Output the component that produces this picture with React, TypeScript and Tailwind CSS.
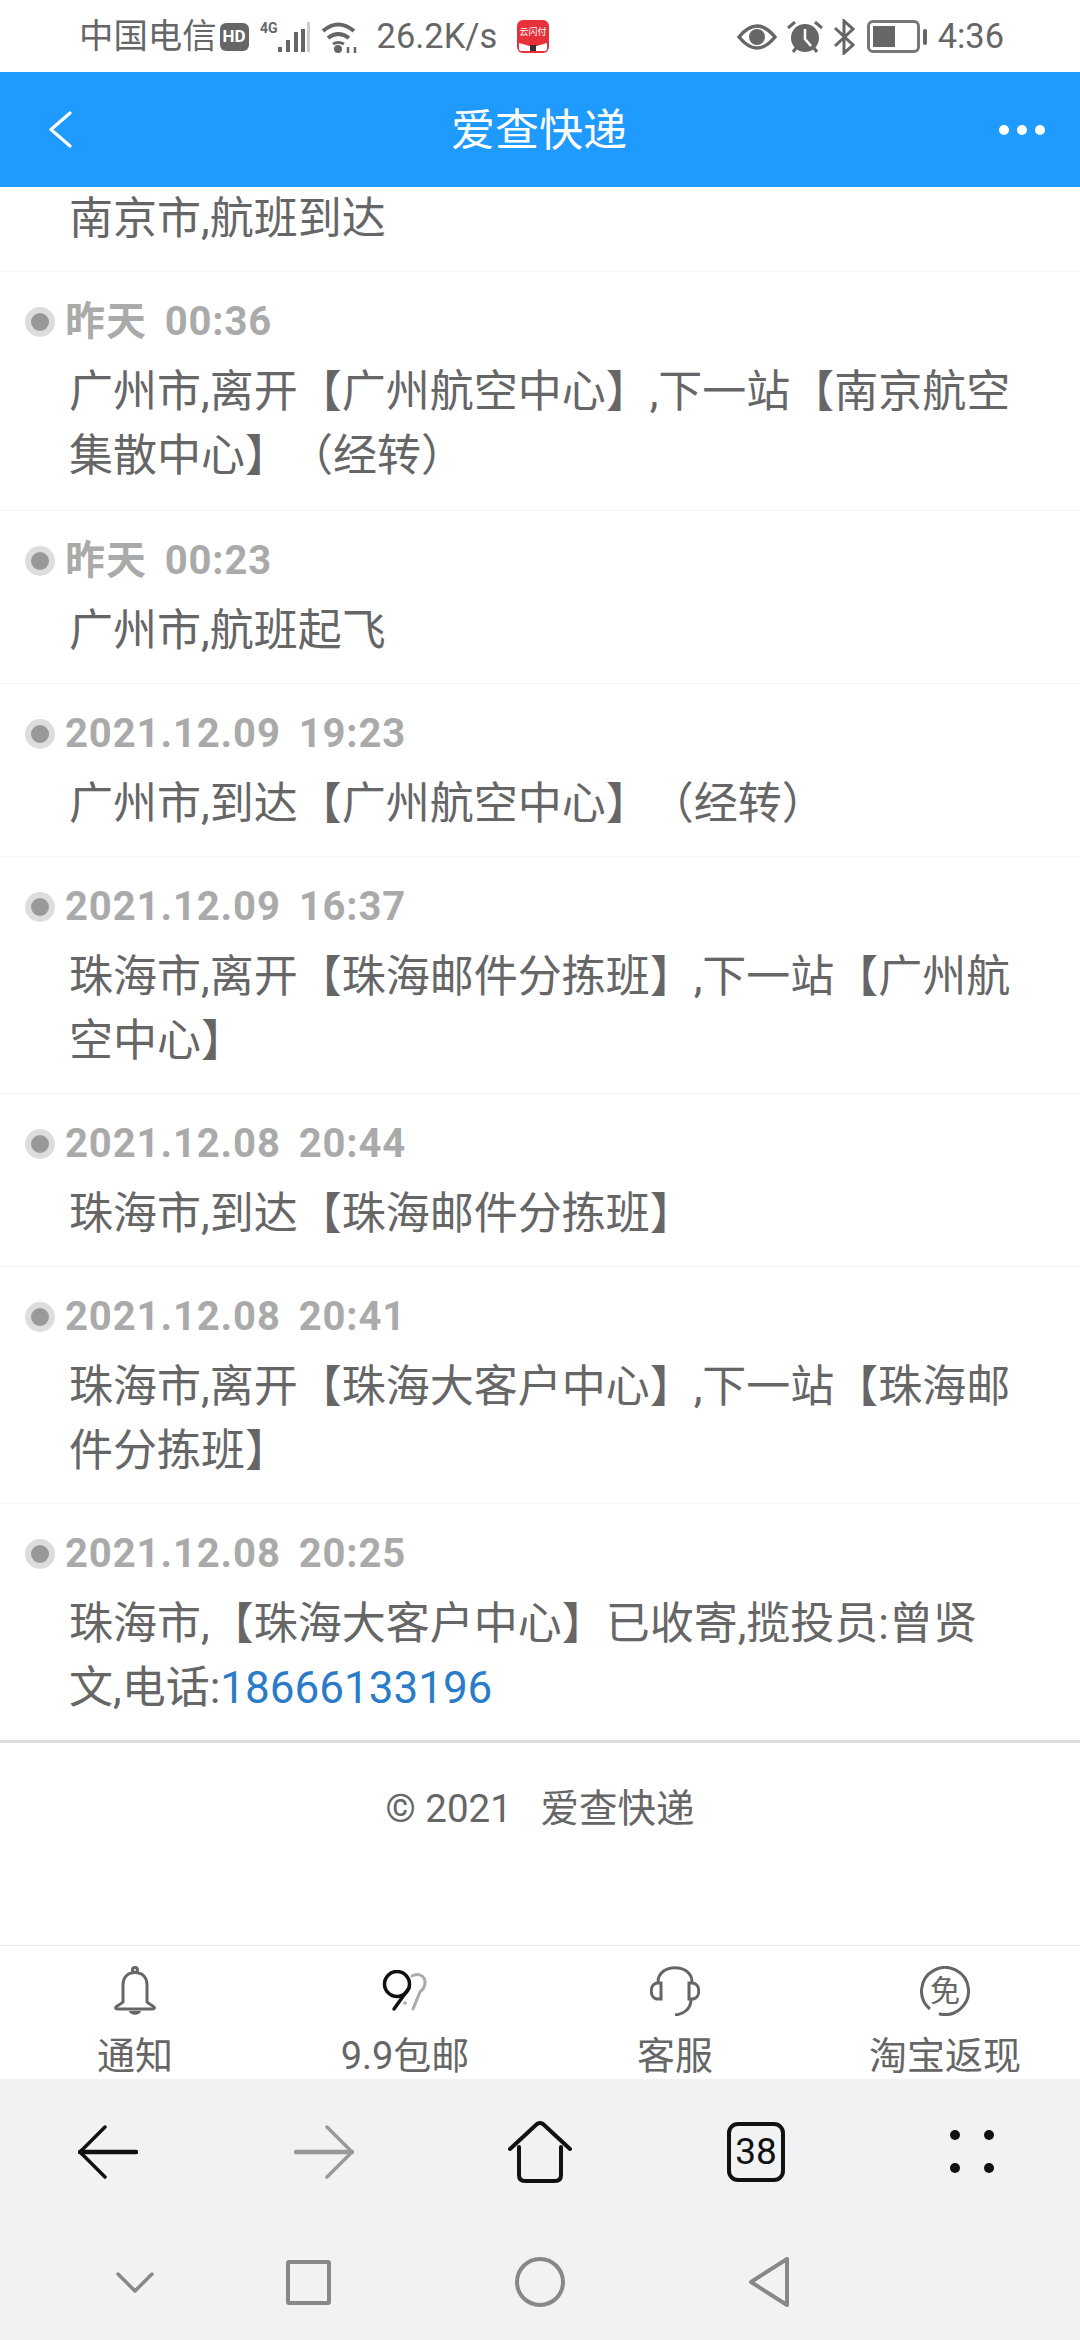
const rows = [
  { time: "昨天 00:36", text: "广州市,离开【广州航空中心】,下一站【南京航空集散中心】（经转）" },
  { time: "昨天 00:23", text: "广州市,航班起飞" },
  { time: "2021.12.09 19:23", text: "广州市,到达【广州航空中心】（经转）" },
  { time: "2021.12.09 16:37", text: "珠海市,离开【珠海邮件分拣班】,下一站【广州航空中心】" },
  { time: "2021.12.08 20:44", text: "珠海市,到达【珠海邮件分拣班】" },
  { time: "2021.12.08 20:41", text: "珠海市,离开【珠海大客户中心】,下一站【珠海邮件分拣班】" },
]

function StatusBar() {
  return (
    <div className="flex h-[72px] items-center justify-between bg-white pl-[79px] pr-[76px] pt-[2px] text-[34.4px] text-[#666]">
      <div className="flex items-center">
        <span>中国电信</span>
        <span className="ml-[3px] flex h-[28px] w-[29px] items-center justify-center rounded-[6px] bg-[#666] text-[17px] font-bold text-white">HD</span>
        <svg width="50" height="34" viewBox="0 0 50 34" className="ml-[11px]">
          <text x="0" y="13" fontSize="14" fontWeight="700" fill="#666" fontFamily="Roboto">4G</text>
          <rect x="18" y="27" width="4" height="5" fill="#666" />
          <rect x="26" y="20" width="4" height="12" fill="#666" />
          <rect x="34" y="12" width="4" height="20" fill="#666" />
          <rect x="41" y="9" width="4" height="23" fill="#666" />
          <rect x="47" y="2" width="3" height="30" fill="#ccc" />
        </svg>
        <svg width="38" height="32" viewBox="0 0 38 32" fill="none" stroke="#666" strokeWidth="4" className="ml-[11px]">
          <path d="M2 10 Q17 -3 33 10" />
          <path d="M7 17 Q17 9 28 17" />
          <path d="M12 23 Q17 20 23 23" strokeWidth="3" />
          <circle cx="17" cy="28" r="4" fill="#666" stroke="none" />
          <path d="M27 26v6M34 26v6" strokeWidth="2.5" />
        </svg>
        <span className="ml-[18px]">26.2K/s</span>
        <svg width="32" height="33" viewBox="0 0 32 33" className="ml-[20px]">
          <rect width="32" height="33" rx="6" fill="#e8303a" />
          <path d="M2 23 L16 27 L30 23 V29 Q30 31 27 31 H5 Q2 31 2 29 Z" fill="#fff" />
          <text x="16" y="15" fontSize="9" textAnchor="middle" fill="#fff" fontFamily="'Noto Sans CJK SC'">云闪付</text>
          <rect x="13" y="25" width="6" height="6" fill="#333" />
        </svg>
      </div>
      <div className="flex items-center">
        <svg width="40" height="26" viewBox="0 0 40 26" fill="none" stroke="#666" strokeWidth="3.5">
          <path d="M2 13 Q20 -9 38 13 Q20 35 2 13 Z" />
          <circle cx="20" cy="13" r="8" fill="#666" stroke="none" />
        </svg>
        <svg width="36" height="32" viewBox="0 0 36 32" className="ml-[10px]">
          <circle cx="18" cy="17" r="14" fill="#666" />
          <path d="M18 8v10l6 7" fill="none" stroke="#fff" strokeWidth="2.5" />
          <path d="M1 7 L8 1 M35 7 L28 1 M6 31 L9 27 M30 31 L27 27" stroke="#666" strokeWidth="3" />
        </svg>
        <svg width="22" height="36" viewBox="0 0 22 36" fill="none" stroke="#666" strokeWidth="3" className="ml-[10px]">
          <path d="M2 9 L20 26 L11 34 V2 L20 10 L2 27" />
        </svg>
        <div className="ml-[12px] flex h-[33px] w-[53px] items-center rounded-[6px] border-[3px] border-[#777] px-[3px]">
          <div className="h-[21px] w-[22px] bg-[#666]" />
        </div>
        <div className="ml-[3px] h-[16px] w-[4px] rounded-sm bg-[#666]" />
        <span className="ml-[11px]">4:36</span>
      </div>
    </div>
  )
}

function Header() {
  return (
    <div className="flex h-[115px] items-center justify-between bg-[#1f9bff] pl-[48px] pr-[35px] text-white">
      <svg width="24" height="37" viewBox="0 0 24 37" fill="none" stroke="#fff" strokeWidth="3.2" strokeLinecap="round" strokeLinejoin="round">
        <path d="M22 2 L3 18.5 L22 35" />
      </svg>
      <span className="ml-[7px] mt-[2px] text-[44px]">爱查快递</span>
      <div className="flex gap-[8px]">
        <div className="h-[10px] w-[10px] rounded-full bg-white" />
        <div className="h-[10px] w-[10px] rounded-full bg-white" />
        <div className="h-[10px] w-[10px] rounded-full bg-white" />
      </div>
    </div>
  )
}

function Row({ time, children, last, first }: { time: string; children: React.ReactNode; last?: boolean; first?: boolean }) {
  return (
    <div
      className={
        last
          ? "border-b-[3px] border-[#ddd] pb-[20px] pt-[27px]"
          : first
            ? "border-b border-[#f3f3f3] pb-[22px] pt-[27px]"
            : "border-b border-[#f3f3f3] pb-[20px] pt-[27px]"
      }
    >
      <div className="flex h-[46px] items-center pl-[25px]">
        <div className="flex h-[30px] w-[30px] items-center justify-center rounded-full bg-[#ddd]">
          <div className="h-[18px] w-[18px] rounded-full bg-[#999]" />
        </div>
        <span className="ml-[10px] whitespace-pre text-[40px] font-bold tracking-[0.9px] text-[#aaa] [word-spacing:7px]">{time}</span>
      </div>
      <div className="mt-[15px] pl-[69px] pr-[55px] text-[44px] leading-[64px] text-[#666] [text-spacing-trim:space-all]">{children}</div>
    </div>
  )
}

function TabIcon({ name }: { name: string }) {
  if (name === "bell")
    return (
      <svg width="42" height="50" viewBox="0 0 42 50" fill="none" stroke="#666" strokeWidth="3" strokeLinejoin="round">
        <circle cx="21" cy="4" r="2.5" />
        <path d="M9 36 V19 C9 11 14 6.5 21 6.5 C28 6.5 33 11 33 19 V36 C35 38 38 39 40 41 C41 42 40 43 38 43 H4 C2 43 1 42 2 41 C4 39 7 38 9 36 Z" />
        <path d="M15 45 H27 C26 50 16 50 15 45 Z" fill="#666" stroke="none" />
      </svg>
    )
  if (name === "99")
    return (
      <svg width="46" height="42" viewBox="0 0 46 42" fill="none" strokeWidth="3.5" strokeLinecap="round">
        <path d="M30 6 C42 0 48 14 38 22 L31 39" stroke="#aaa" strokeWidth="3" />
        <circle cx="23" cy="33" r="1.8" fill="#aaa" stroke="none" />
        <circle cx="15" cy="14" r="12.5" stroke="#111" />
        <path d="M27 18 L12 39" stroke="#111" />
      </svg>
    )
  if (name === "headset")
    return (
      <svg width="50" height="50" viewBox="0 0 50 50" fill="none" stroke="#666" strokeWidth="3">
        <path d="M8 16 C8 -3 42 -3 42 16" />
        <path d="M11 17 V33 H8 C-1 33 -1 17 8 17 Z" />
        <path d="M39 17 V33 H42 C51 33 51 17 42 17 Z" />
        <path d="M41 33 C41 42 35 48 25 49" />
      </svg>
    )
  return (
    <div className="relative flex h-[50px] w-[50px] items-center justify-center text-[30px] leading-none text-[#666]">
      <svg width="50" height="50" viewBox="0 0 50 50" fill="none" stroke="#666" strokeWidth="3" className="absolute inset-0">
        <path d="M9.9 43 A23.5 23.5 0 1 1 18.9 47.7" />
      </svg>
      免
    </div>
  )
}

const tabs = [
  { icon: "bell", label: "通知" },
  { icon: "99", label: "9.9包邮" },
  { icon: "headset", label: "客服" },
  { icon: "free", label: "淘宝返现" },
]

function TabBar() {
  return (
    <div className="grid h-[134px] grid-cols-4 border-t border-[#ececec] bg-white">
      {tabs.map((t) => (
        <div key={t.label} className="flex flex-col items-center pt-[20px]">
          <div className="flex h-[50px] items-center justify-center">
            <TabIcon name={t.icon} />
          </div>
          <span className="mt-[17px] text-[38px] leading-[46px] text-[#666]">{t.label}</span>
        </div>
      ))}
    </div>
  )
}

function BrowserBar() {
  return (
    <div className="grid h-[151px] grid-cols-5 items-center pb-[6px]">
      <div className="flex justify-center">
        <svg width="60" height="54" viewBox="0 0 60 54" fill="none" stroke="#111" strokeWidth="3.5" strokeLinecap="round">
          <path d="M27 2 L2 27 L27 52" />
          <path d="M2 27 H58" strokeWidth="4.5" />
        </svg>
      </div>
      <div className="flex justify-center">
        <svg width="60" height="54" viewBox="0 0 60 54" fill="none" stroke="#999" strokeWidth="3.5" strokeLinecap="round">
          <path d="M33 2 L58 27 L33 52" />
          <path d="M2 27 H58" strokeWidth="4.5" />
        </svg>
      </div>
      <div className="flex justify-center">
        <svg width="64" height="62" viewBox="0 0 64 62" fill="none" stroke="#111" strokeWidth="4" strokeLinecap="round" strokeLinejoin="round">
          <path d="M2 28 L29 3 Q32 1 35 3 L62 28" />
          <path d="M11 26 V54 Q11 60 17 60 H47 Q53 60 53 54 V26" />
        </svg>
      </div>
      <div className="flex justify-center">
        <div className="flex h-[60px] w-[58px] items-center justify-center rounded-[11px] border-[4px] border-[#111] text-[37px] text-[#111]">38</div>
      </div>
      <div className="flex justify-center">
        <div className="grid grid-cols-2 gap-x-[24px] gap-y-[23px]">
          <div className="h-[10px] w-[10px] rounded-full bg-[#111]" />
          <div className="h-[10px] w-[10px] rounded-full bg-[#111]" />
          <div className="h-[10px] w-[10px] rounded-full bg-[#111]" />
          <div className="h-[10px] w-[10px] rounded-full bg-[#111]" />
        </div>
      </div>
    </div>
  )
}

function NavBar() {
  return (
    <div className="flex h-[110px] items-center pb-[6px] pl-[116px]">
      <svg width="38" height="21" viewBox="0 0 38 21" fill="none" stroke="#888" strokeWidth="3.5" strokeLinecap="round" strokeLinejoin="round">
        <path d="M2 2 L19 19 L36 2" />
      </svg>
      <div className="ml-[132px] h-[45px] w-[45px] rounded-[3px] border-[4px] border-[#888]" />
      <div className="ml-[184px] h-[50px] w-[50px] rounded-full border-[4px] border-[#888]" />
      <svg width="42" height="50" viewBox="0 0 42 50" fill="none" stroke="#888" strokeWidth="4" strokeLinejoin="round" className="ml-[183px]">
        <path d="M39 2 V48 L3 25 Z" />
      </svg>
    </div>
  )
}

export default function App() {
  return (
    <div className="flex h-[2340px] w-[1080px] flex-col overflow-hidden bg-white font-[Roboto,'Noto_Sans_CJK_SC',sans-serif]">
      <StatusBar />
      <Header />
      <div className="flex-1">
        <div className="h-[85px] border-b border-[#f3f3f3] pl-[69px] text-[44px] leading-[64px] text-[#666]">南京市,航班到达</div>
        {rows.map((r, i) => (
          <Row key={r.time} time={r.time} first={i === 0}>{r.text}</Row>
        ))}
        <Row time="2021.12.08 20:25" last>
          珠海市,【珠海大客户中心】已收寄,揽投员:曾贤文,电话:<span className="text-[#2a7bc8]">18666133196</span>
        </Row>
        <div className="pt-[41px] text-center text-[38.5px] leading-[50px] text-[#666]">© 2021&nbsp;&nbsp;&nbsp;爱查快递</div>
      </div>
      <TabBar />
      <div className="bg-[#f1f2f4]">
        <BrowserBar />
        <NavBar />
      </div>
    </div>
  )
}
